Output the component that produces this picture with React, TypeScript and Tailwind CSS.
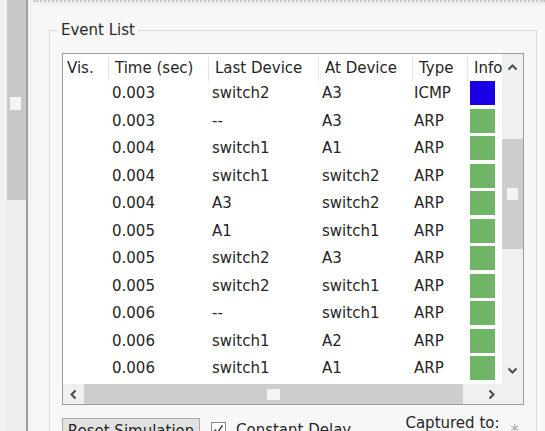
import React from "react";

const rows: [string, string, string, string, string][] = [
  ["0.003", "switch2", "A3", "ICMP", "#1a00e6"],
  ["0.003", "--", "A3", "ARP", "#70b468"],
  ["0.004", "switch1", "A1", "ARP", "#70b468"],
  ["0.004", "switch1", "switch2", "ARP", "#70b468"],
  ["0.004", "A3", "switch2", "ARP", "#70b468"],
  ["0.005", "A1", "switch1", "ARP", "#70b468"],
  ["0.005", "switch2", "A3", "ARP", "#70b468"],
  ["0.005", "switch2", "switch1", "ARP", "#70b468"],
  ["0.006", "--", "switch1", "ARP", "#70b468"],
  ["0.006", "switch1", "A2", "ARP", "#70b468"],
  ["0.006", "switch1", "A1", "ARP", "#70b468"],
  ["0.006", "A1", "switch1", "ICMP", "#3a20e8"],
];

function Chevron({ dir }: { dir: "up" | "down" | "left" | "right" }) {
  const pts =
    dir === "up"
      ? "1.5,6.5 5.5,2.5 9.5,6.5"
      : dir === "down"
      ? "1.5,2.5 5.5,6.5 9.5,2.5"
      : dir === "left"
      ? "6.5,1.5 2.5,5.5 6.5,9.5"
      : "2.5,1.5 6.5,5.5 2.5,9.5";
  const w = dir === "up" || dir === "down" ? 11 : 9;
  const h = dir === "up" || dir === "down" ? 9 : 11;
  return (
    <svg width={w} height={h} viewBox={`0 0 ${w} ${h}`}>
      <polyline points={pts} fill="none" stroke="#4a4a4a" strokeWidth="2" />
    </svg>
  );
}

export default function App() {
  return (
    <div className="w-[545px] h-[431px] overflow-hidden flex bg-[#f0f0f0] font-['DejaVu_Sans',sans-serif] text-[15px] text-[#262626]">
      <div className="w-[7px] shrink-0 bg-[#f0f0f0]" />
      <div className="w-[19px] shrink-0 flex flex-col">
        <div className="h-[200px] shrink-0 bg-[#c8c8c8] pt-[97px] pl-[3px]">
          <div className="w-[11px] h-[13px] bg-[#f4f4f4]" />
        </div>
        <div className="flex-1 bg-[#eeeeee]" />
      </div>
      <div className="w-[2px] shrink-0 bg-[#9aa0a8]" />
      <div className="w-[5px] shrink-0 bg-[#f3f3f3]" />
      <div className="flex-1 min-w-0 flex flex-col bg-[#f7f7f7]">
        <div className="h-[5px] shrink-0 bg-[#eeeeee] border-t-2 border-dotted border-[#c4c4c4]" />
        <div className="relative shrink-0 mt-[25px] ml-[16px] w-[488px] h-[420px] border border-b-0 border-[#d8d8d8] pl-[12px] pt-[22px]">
          <div className="absolute left-[8px] top-[-10px] px-[3px] bg-[#f7f7f7] leading-[18px] text-[#2a2a2a]">
            Event List
          </div>
          <div className="w-[462px] h-[352px] border border-[#9c9c9c] flex flex-col bg-white">
            <div className="flex-1 min-h-0 flex">
              <div className="flex-1 min-w-0 overflow-hidden flex flex-col">
                <div className="h-[27px] shrink-0 flex pt-[2px] leading-[25px] bg-white">
                  <div className="w-[46px] shrink-0 border-r border-[#e6e6e6] pl-[4px]">Vis.</div>
                  <div className="w-[100px] shrink-0 border-r border-[#e6e6e6] pl-[6px]">Time (sec)</div>
                  <div className="w-[110px] shrink-0 border-r border-[#e6e6e6] pl-[6px]">Last Device</div>
                  <div className="w-[94px] shrink-0 border-r border-[#e6e6e6] pl-[6px]">At Device</div>
                  <div className="w-[55px] shrink-0 border-r border-[#e6e6e6] pl-[6px]">Type</div>
                  <div className="flex-1 min-w-0 overflow-hidden whitespace-nowrap pl-[6px]">Info</div>
                </div>
                {rows.map((r, i) => (
                  <div key={i} className="h-[27.5px] shrink-0 flex items-start leading-[24px]">
                    <div className="w-[46px] shrink-0" />
                    <div className="w-[100px] shrink-0 pl-[3px]">{r[0]}</div>
                    <div className="w-[110px] shrink-0 pl-[3px]">{r[1]}</div>
                    <div className="w-[94px] shrink-0 pl-[3px]">{r[2]}</div>
                    <div className="w-[55px] shrink-0 pl-[1px]">{r[3]}</div>
                    <div className="flex-1 min-w-0 pl-[2px]">
                      <div className="w-[25px] h-[24px]" style={{ backgroundColor: r[4] }} />
                    </div>
                  </div>
                ))}
              </div>
              <div className="w-[21px] shrink-0 flex flex-col bg-[#f0f0f0]">
                <div className="h-[27px] shrink-0 flex items-center justify-center">
                  <Chevron dir="up" />
                </div>
                <div className="h-[58px] shrink-0" />
                <div className="h-[110px] shrink-0 bg-[#cdcdcd] flex items-center justify-center">
                  <div className="w-[11px] h-[12px] bg-[#f4f4f4]" />
                </div>
                <div className="flex-1" />
                <div className="h-[27px] shrink-0 flex items-center justify-center">
                  <Chevron dir="down" />
                </div>
              </div>
            </div>
            <div className="h-[20px] shrink-0 flex bg-[#f0f0f0]">
              <div className="w-[21px] shrink-0 flex items-center justify-center">
                <Chevron dir="left" />
              </div>
              <div className="w-[379px] shrink-0 bg-[#cdcdcd] flex items-center justify-center">
                <div className="w-[13px] h-[11px] bg-[#f4f4f4]" />
              </div>
              <div className="flex-1 flex items-center justify-end pr-[6px]">
                <Chevron dir="right" />
              </div>
              <div className="w-[21px] shrink-0 bg-[#f0f0f0]" />
            </div>
          </div>
          <div className="flex items-start mt-[13px]">
            <div className="w-[138px] h-[26px] shrink-0 border border-[#a9a9a9] bg-[#e1e1e1] text-center leading-[24px]">
              Reset Simulation
            </div>
            <div className="ml-[11px] mt-[4px] w-[15px] h-[15px] shrink-0 border border-[#8a8a8a] bg-white flex items-center justify-center">
              <svg width="11" height="11" viewBox="0 0 11 11">
                <polyline points="1.5,5.5 4.5,8.5 9.5,1.5" fill="none" stroke="#333" strokeWidth="1.3" />
              </svg>
            </div>
            <div className="ml-[10px] mt-[3px] leading-[18px] whitespace-nowrap">Constant Delay</div>
            <div className="flex-1" />
            <div className="-mt-[4px] leading-[18px] whitespace-nowrap">Captured to:</div>
            <div className="ml-[11px] mr-[17px] mt-[4px] leading-[18px] text-[17px] text-[#a8a8a8]">*</div>
          </div>
        </div>
      </div>
    </div>
  );
}
